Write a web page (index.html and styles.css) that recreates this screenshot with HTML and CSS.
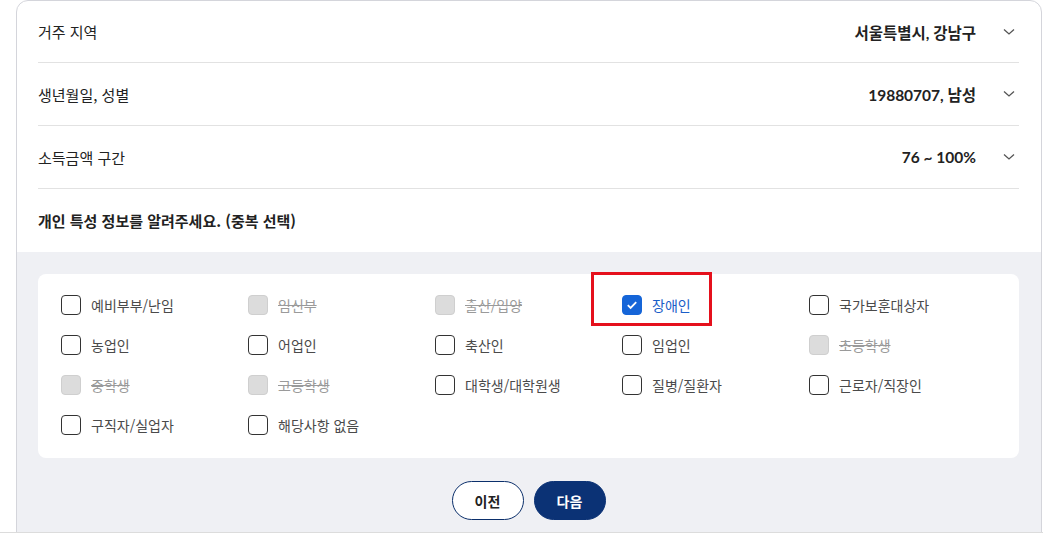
FILE: index.html
```html
<!DOCTYPE html>
<html lang="ko">
<head>
<meta charset="utf-8">
<link rel="stylesheet" href="styles.css">
</head>
<body>
<div class="frame">
  <div class="card">
    <div class="info">
      <div class="row">
        <span class="label">거주 지역</span>
        <span class="value">서울특별시, 강남구</span>
        <span class="chev"><svg width="12" height="8" viewBox="0 0 12 8"><path d="M1 1.5 L6 6 L11 1.5" fill="none" stroke="#555" stroke-width="1.3"/></svg></span>
      </div>
      <div class="row">
        <span class="label">생년월일, 성별</span>
        <span class="value">19880707, 남성</span>
        <span class="chev"><svg width="12" height="8" viewBox="0 0 12 8"><path d="M1 1.5 L6 6 L11 1.5" fill="none" stroke="#555" stroke-width="1.3"/></svg></span>
      </div>
      <div class="row">
        <span class="label">소득금액 구간</span>
        <span class="value">76 ~ 100%</span>
        <span class="chev"><svg width="12" height="8" viewBox="0 0 12 8"><path d="M1 1.5 L6 6 L11 1.5" fill="none" stroke="#555" stroke-width="1.3"/></svg></span>
      </div>
      <div class="heading">개인 특성 정보를 알려주세요. (중복 선택)</div>
    </div>
    <div class="section">
      <div class="options">
        <div class="opt"><span class="box"></span><span class="txt">예비부부/난임</span></div>
        <div class="opt disabled"><span class="box"></span><span class="txt">임신부</span></div>
        <div class="opt disabled"><span class="box"></span><span class="txt">출산/입양</span></div>
        <div class="opt checked"><span class="box"><svg width="12" height="10" viewBox="0 0 12 10"><path d="M1.8 5.2 L4.6 8 L10.2 2.2" fill="none" stroke="#fff" stroke-width="1.8"/></svg></span><span class="txt">장애인</span><span class="highlight"></span></div>
        <div class="opt"><span class="box"></span><span class="txt">국가보훈대상자</span></div>
        <div class="opt"><span class="box"></span><span class="txt">농업인</span></div>
        <div class="opt"><span class="box"></span><span class="txt">어업인</span></div>
        <div class="opt"><span class="box"></span><span class="txt">축산인</span></div>
        <div class="opt"><span class="box"></span><span class="txt">임업인</span></div>
        <div class="opt disabled"><span class="box"></span><span class="txt">초등학생</span></div>
        <div class="opt disabled"><span class="box"></span><span class="txt">중학생</span></div>
        <div class="opt disabled"><span class="box"></span><span class="txt">고등학생</span></div>
        <div class="opt"><span class="box"></span><span class="txt">대학생/대학원생</span></div>
        <div class="opt"><span class="box"></span><span class="txt">질병/질환자</span></div>
        <div class="opt"><span class="box"></span><span class="txt">근로자/직장인</span></div>
        <div class="opt"><span class="box"></span><span class="txt">구직자/실업자</span></div>
        <div class="opt"><span class="box"></span><span class="txt">해당사항 없음</span></div>
      </div>
      <div class="buttons">
        <button class="btn prev">이전</button>
        <button class="btn next">다음</button>
      </div>
    </div>
  </div>
</div>
</body>
</html>
```
FILE: styles.css
```css
html, body {
  margin: 0;
  padding: 0;
  background: #fff;
}
body {
  font-family: "Noto Sans CJK KR", "Noto Sans", sans-serif;
  color: #222;
}
.frame {
  height: 532px;
  overflow: hidden;
  border-bottom: 1px solid #dcdcdc;
  padding-left: 16px;
}
.card {
  width: 1024px;
  border: 1px solid #d4d5db;
  border-radius: 12px;
  overflow: hidden;
  background: #fff;
  height: 560px;
  display: flex;
  flex-direction: column;
}
.info {
  padding: 0 22px 0 21px;
}
.row {
  display: flex;
  align-items: center;
  height: 62px;
  border-bottom: 1px solid #e2e2e2;
}
.row:first-child {
  height: 61px;
}
.label {
  font-size: 15px;
  flex: 1;
  color: #222;
}
.value {
  font-family: "Lato", "Noto Sans CJK KR", sans-serif;
  font-weight: 700;
  font-size: 15.5px;
  color: #222;
}
.chev {
  width: 20px;
  margin-left: 23px;
  display: flex;
  justify-content: center;
  align-items: center;
}
.chev svg { display: block; }
.heading {
  height: 63px;
  display: flex;
  align-items: center;
  font-size: 15px;
  font-weight: 700;
  color: #222;
}
.section {
  flex: 1;
  background: #eff0f4;
  padding: 22px 22px 0 21px;
}
.options {
  background: #fff;
  border-radius: 8px;
  padding: 21px 23px 23px 23px;
  display: grid;
  grid-template-columns: repeat(5, 1fr);
  grid-auto-rows: 20px;
  row-gap: 20px;
}
.opt {
  display: flex;
  align-items: center;
  height: 20px;
  position: relative;
}
.box {
  width: 18px;
  height: 18px;
  border: 1px solid #333;
  border-radius: 4px;
  background: #fff;
  display: flex;
  align-items: center;
  justify-content: center;
  flex: none;
}
.box svg { display: block; }
.txt {
  margin-left: 10px;
  font-size: 14px;
  color: #4a4a4a;
}
.disabled .box {
  background: #dcdcdc;
  border-color: #cfcfcf;
}
.disabled .txt {
  color: #9a9a9a;
  text-decoration: line-through;
}
.checked .box {
  background: #1565d8;
  border-color: #1565d8;
}
.checked .txt {
  color: #1a5ec8;
}
.highlight {
  position: absolute;
  left: -31px;
  top: -23px;
  width: 115px;
  height: 48px;
  border: 3px solid #e5101c;
}
.buttons {
  display: flex;
  justify-content: center;
  gap: 10px;
  padding-top: 23px;
}
.btn {
  width: 72px;
  height: 39px;
  border-radius: 20px;
  font-family: "Noto Sans CJK KR", sans-serif;
  font-size: 14px;
  font-weight: 700;
  cursor: pointer;
}
.prev {
  background: #fff;
  border: 1px solid #0b2f6b;
  color: #222;
}
.next {
  background: #0b3275;
  border: 1px solid #0b3275;
  color: #fff;
}
```
